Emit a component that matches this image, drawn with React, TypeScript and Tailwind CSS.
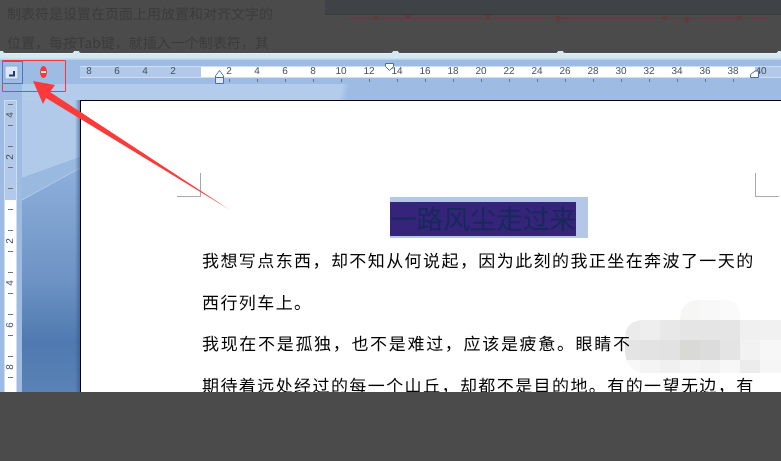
import React from "react";

const cjk = { fontFamily: '"Noto Sans CJK SC", sans-serif' };
const hnums = ["8", "6", "4", "2", "", "2", "4", "6", "8", "10", "12", "14", "16", "18", "20", "22", "24", "26", "28", "30", "32", "34", "36", "38", "40"];
const vnums = ["4", "2", "", "2", "4", "6", "8"];
const mosaic: [number, number, string][] = [
  [680, 300, "#f6f6f5"], [700, 300, "#f8f8f8"], [720, 300, "#fafafa"],
  [620, 320, "#ebebeb"], [640, 320, "#eeeeee"], [660, 320, "#e8e8e8"], [680, 320, "#e5e5e5"], [700, 320, "#e5e5e5"], [720, 320, "#e5e5e5"], [740, 320, "#f0f0f0"], [760, 320, "#f1f1f1"],
  [620, 340, "#e4e4e4"], [640, 340, "#e3e3e3"], [660, 340, "#e2e2e2"], [680, 340, "#d9d9d8"], [700, 340, "#dcdcdc"], [720, 340, "#e4e4e4"], [740, 340, "#f2f2f2"], [760, 340, "#f7f7f7"],
  [620, 360, "#f8f8f8"], [640, 360, "#f4f4f4"], [660, 360, "#f0f0f0"], [680, 360, "#f5f5f5"], [700, 360, "#f2f2f2"], [720, 360, "#f7f7f7"], [740, 360, "#ececec"], [760, 360, "#f6f6f6"],
];

export default function App() {
  return (
    <div className="relative flex h-[461px] w-[781px] flex-col overflow-hidden bg-[#4b4b4b] [text-rendering:geometricPrecision]" style={cjk}>
      {/* dimmed top */}
      <div className="flex h-[51px] shrink-0">
        <div className="w-[325px] pl-[7px] text-[14px] text-[#3c3c3c]">
          <div className="h-[29px] leading-[29px]">制表符是设置在页面上用放置和对齐文字的</div>
          <div className="h-[22px] leading-[29px]">位置，每按Tab键，就插入一个制表符，其</div>
        </div>
        <div className="flex-1">
          <div className="h-[15px] border-b border-[#3a3b3d] bg-[#3f4348]" />
          <svg width="456" height="12" viewBox="325 15 456 12" className="block">
            <path d="M348 18.5H768" stroke="#5f3d3d" strokeWidth="1" />
            <path d="M373 16h6l-3 5zM405 15h6l-3 4zM485 15h6l-3 6zM555 16h6l-3 8zM662 16h6l-3 5zM684 17h6l-3 7zM736 16h6l-3 5z" fill="#633a3a" />
          </svg>
        </div>
      </div>

      {/* tab strip */}
      <div className="flex h-[9px] shrink-0 gap-[3px] bg-[linear-gradient(180deg,#d4e8f2_0%,#d4e8f2_72%,#b3cdea_100%)] px-[2px]">
        <div className="h-[3px] w-[73px] rounded-b-[3px] border-x border-b border-[#e4f1f6] bg-[#4b4b4b]" />
        <div className="h-[3px] w-[316px] rounded-b-[3px] border-x border-b border-[#e4f1f6] bg-[#4b4b4b]" />
        <div className="h-[3px] w-[162px] rounded-b-[3px] border-x border-b border-[#e4f1f6] bg-[#4b4b4b]" />
        <div className="h-[3px] flex-1 rounded-b-[3px] border-x border-b border-[#e4f1f6] bg-[#4b4b4b]" />
      </div>

      {/* horizontal ruler row */}
      <div className="flex h-[24px] shrink-0 bg-[#9dbbe3] pt-[6px]" style={{ fontFamily: '"Liberation Sans", sans-serif' }}>
        <div className="w-[80px] shrink-0" />
        <div className="h-[12px] flex-1 border-y border-[#cfdff2] bg-[linear-gradient(90deg,#b2c9ea_121px,#ffffff_121px,#ffffff_675px,#b2c9ea_675px)]">
          <div className="-ml-[5px] flex">
            {hnums.map((n, i) => (
              <div key={i} className="relative h-[10px] w-[28px] text-center text-[10px] leading-[10px] text-[#44505f]">
                {n}
                {i > 4 && i < 24 && <span className="absolute left-[14px] top-[12px] h-[3px] w-[1px] bg-[#6b7280]" />}
              </div>
            ))}
          </div>
        </div>
      </div>

      {/* work area */}
      <div className="flex h-[308px] shrink-0 overflow-hidden bg-[#9dbbe3]">
        <div className="w-[22px] shrink-0 pl-[4px] pt-[16px]">
          <div className="h-[292px] w-[13px] overflow-hidden border-x border-t border-[#cfdff2] bg-[linear-gradient(180deg,#b2c9ea_99px,#ffffff_99px)]">
            <div className="-mt-[7px]">
              {vnums.map((n, i) => (
                <div key={i} className="flex h-[42px] flex-col items-center justify-center gap-[5px] text-[10px] leading-[10px] text-[#44505f]" style={{ fontFamily: '"Liberation Sans", sans-serif' }}>
                  <span className="h-[1px] w-[5px] bg-[#6b7280]" />
                  <span className="-rotate-90">{n || "\u00a0"}</span>
                  <span className="h-[1px] w-[5px] bg-[#6b7280]" />
                </div>
              ))}
            </div>
          </div>
        </div>

        <div className="flex min-h-0 flex-1 flex-col">
          <div className="h-[16px] shrink-0 bg-[linear-gradient(100deg,#b3cceb_42%,#9dbbe3_43%)]" />
          <div className="flex min-h-0 flex-1">
            <div className="w-[58px] shrink-0 bg-[linear-gradient(180deg,#8fb0dc_0%,#8fb0dc_22%,#6d93c4_62%,#4f79b0_83%,#5a82b6_100%)]" />
            <div className="relative min-h-0 flex-1 overflow-hidden border-l border-t border-black bg-white pt-[96px] text-[17px] tracking-[1.42px] text-black">
              <span className="absolute left-[96px] top-[95px] h-[1px] w-[24px] bg-[#a9a9a9]" />
              <span className="absolute left-[119px] top-[72px] h-[24px] w-[1px] bg-[#a9a9a9]" />
              <span className="absolute left-[674px] top-[72px] h-[24px] w-[1px] bg-[#a9a9a9]" />
              <span className="absolute left-[674px] top-[95px] h-[1px] w-[24px] bg-[#a9a9a9]" />

              <div className="ml-[309px] h-[41px] w-[198px] bg-[#b4c7e7] pt-[5px]">
                <div className="h-[34px] w-[186px] whitespace-nowrap bg-[#35247a] text-[26.6px] leading-[32px] tracking-normal text-[#16295a]">一路风尘走过来</div>
              </div>
              <div className="ml-[121px] mt-[1px]">
                <div className="h-[41.5px] whitespace-nowrap leading-[41.5px]">我想写点东西，却不知从何说起，因为此刻的我正坐在奔波了一天的</div>
                <div className="h-[41.5px] whitespace-nowrap leading-[41.5px]">西行列车上。</div>
                <div className="h-[41.5px] whitespace-nowrap leading-[41.5px] tracking-[1.68px]">我现在不是孤独，也不是难过，应该是疲惫。眼睛不</div>
                <div className="h-[41.5px] whitespace-nowrap leading-[41.5px]">期待着远处经过的每一个山丘，却都不是目的地。有的一望无边，有</div>
              </div>
            </div>
          </div>
        </div>
      </div>

      {/* overlays */}
      <svg width="781" height="392" className="pointer-events-none absolute left-0 top-0">
        <defs>
          <clipPath id="patch">
            <path d="M625 338Q625 320 645 320H680Q680 300 700 300H725Q740 300 740 320H781V373H640Q625 368 625 350Z" />
          </clipPath>
          <linearGradient id="pageShadow" x1="0" x2="1" y1="0" y2="0">
            <stop offset="0" stopColor="#2f4f80" stopOpacity="0" />
            <stop offset="1" stopColor="#2f4f80" stopOpacity="0.55" />
          </linearGradient>
        </defs>
        <path d="M22 100H80V157L22 178Z" fill="#b1caea" />
        <path d="M22 178L80 157V168L22 200Z" fill="#9ab9e0" />
        <path d="M22 200L80 168" stroke="#b4cbe9" strokeWidth="1" fill="none" />
        <rect x="75" y="100" width="5" height="292" fill="url(#pageShadow)" />

        <path d="M2.5 60.5H65.5V91.5H2.5Z" fill="none" stroke="#ef3b3b" />
        <rect x="2.5" y="61.5" width="20" height="22" fill="#9dbbe3" stroke="#4a76c4" />
        <rect x="5" y="66" width="13" height="13" fill="#dce8f7" stroke="#8fa9cc" />
        <path d="M14 71v4.5H9" fill="none" stroke="#1c3d78" strokeWidth="2" />
        <ellipse cx="43.5" cy="72" rx="3.5" ry="6" fill="#f23a3a" />
        <rect x="41" y="71" width="5" height="2" fill="#ffe3e3" />

        <path d="M215.5 83.5V76L219.5 70.5L223.5 76V83.5Z" fill="#dfe9f6" stroke="#4a6ea8" />
        <path d="M215.5 77.5H223.5" stroke="#4a6ea8" />
        <path d="M216 77V76.2L219.5 71.5L223 76.2V77Z" fill="#ffffff" />
        <path d="M385.5 63.5H393.5V66.5L389.5 70.5L385.5 66.5Z" fill="#ffffff" stroke="#4a6ea8" />
        <path d="M750.5 77.5V74.5L755 71H758.5V77.5Z" fill="#ffffff" stroke="#4a6ea8" />

        <path d="M33 81L55 85L50 92L230 210L46 98L43 104Z" fill="#fb3a3a" />
        <g clipPath="url(#patch)" className="mix-blend-multiply">
          {mosaic.map(([x, y, c], i) => (
            <rect key={i} x={x} y={y} width="21" height={y === 360 ? 13 : 21} fill={c} />
          ))}
        </g>
      </svg>
    </div>
  );
}
